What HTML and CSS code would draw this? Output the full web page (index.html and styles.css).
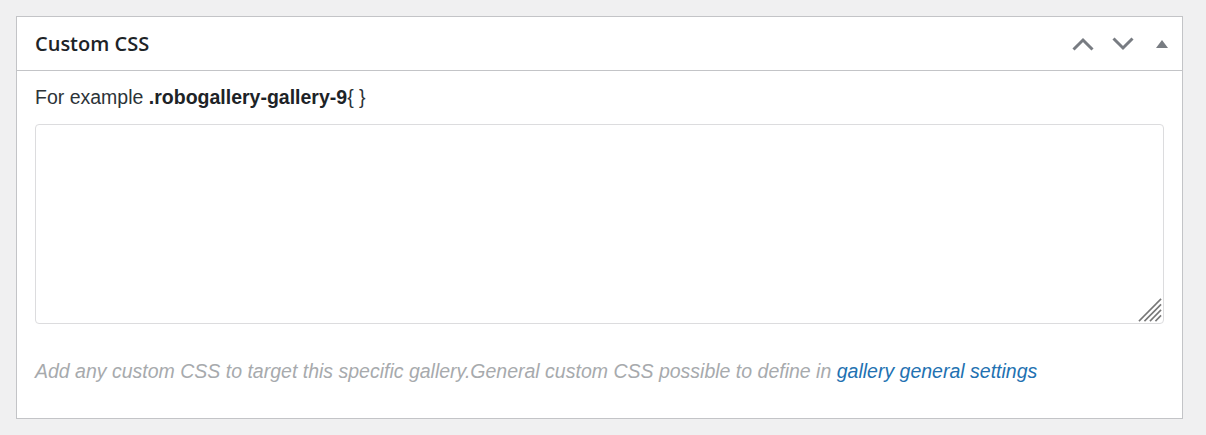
FILE: index.html
```html
<!DOCTYPE html>
<html>
<head>
<meta charset="utf-8">
<link rel="stylesheet" href="styles.css">
</head>
<body>
<div class="postbox">
  <div class="postbox-header">
    <h2 class="hndle">Custom CSS</h2>
    <div class="handle-actions">
      <button class="hbtn" aria-label="Move up">
        <svg width="22" height="14" viewBox="0 0 22 14"><path d="M1.5 12.5 L11 3 L20.5 12.5" fill="none" stroke="#787c82" stroke-width="3"/></svg>
      </button>
      <button class="hbtn" aria-label="Move down">
        <svg width="22" height="14" viewBox="0 0 22 14"><path d="M1.5 1.5 L11 11 L20.5 1.5" fill="none" stroke="#787c82" stroke-width="3"/></svg>
      </button>
      <button class="hbtn toggle" aria-label="Toggle panel">
        <svg width="12" height="9" viewBox="0 0 12 9"><path d="M0 9 L6 1 L12 9 Z" fill="#787c82"/></svg>
      </button>
    </div>
  </div>
  <div class="inside">
    <p class="example">For example <b>.robogallery-gallery-9</b>{ }</p>
    <div class="area-wrap">
      <textarea class="css-area"></textarea>
      <svg class="grip" width="24" height="24" viewBox="0 0 24 24">
        <g stroke="#777" stroke-width="1.6" stroke-linecap="square">
          <path d="M1.5 22.5 L22.5 1.5"/>
          <path d="M7 22.5 L22.5 7"/>
          <path d="M12.5 22.5 L22.5 12.5"/>
          <path d="M18 22.5 L22.5 18"/>
        </g>
      </svg>
    </div>
    <p class="description">Add any custom CSS to target this specific gallery.General custom CSS possible to define in <a href="#">gallery general settings</a></p>
  </div>
</div>
</body>
</html>
```
FILE: styles.css
```css
html, body {
  margin: 0;
  padding: 0;
  background: #f0f0f1;
}
body {
  padding: 16px 0 0 16px;
  font-family: "Liberation Sans", Arial, sans-serif;
  color: #3c434a;
}
.postbox {
  width: 1165px;
  height: 401px;
  background: #fff;
  border: 1px solid #c3c4c7;
  box-sizing: content-box;
}
.postbox-header {
  height: 53px;
  border-bottom: 1px solid #c3c4c7;
  display: flex;
  align-items: center;
  justify-content: space-between;
}
.hndle {
  margin: 0;
  padding-left: 18px;
  font-family: "Open Sans", "Noto Sans", sans-serif;
  font-weight: 600;
  font-size: 20px;
  color: #1d2327;
}
.handle-actions {
  display: flex;
  align-items: center;
  padding-right: 1px;
}
.hbtn {
  background: none;
  border: 0;
  padding: 0;
  margin: 0;
  display: flex;
  align-items: center;
  justify-content: center;
  width: 40px;
  height: 40px;
}
.hbtn.toggle {
  width: 38px;
}
.inside {
  padding: 0 18px;
}
.example {
  margin: 0;
  padding-top: 14px;
  font-size: 19.5px;
  line-height: 24px;
  color: #2c3338;
}
.example b {
  color: #1d2327;
}
.area-wrap {
  position: relative;
  margin-top: 15px;
  width: 1129px;
  height: 200px;
}
.css-area {
  display: block;
  width: 100%;
  height: 100%;
  box-sizing: border-box;
  border: 1px solid #dcdcde;
  border-radius: 4px;
  resize: none;
  margin: 0;
  padding: 6px 8px;
  background: #fff;
}
.grip {
  position: absolute;
  right: 2px;
  bottom: 2px;
}
.description {
  margin: 0;
  padding-top: 35px;
  font-size: 19.5px;
  line-height: 24px;
  font-style: italic;
  color: #a7aaad;
}
.description a {
  color: #2271b1;
  text-decoration: none;
}
```
